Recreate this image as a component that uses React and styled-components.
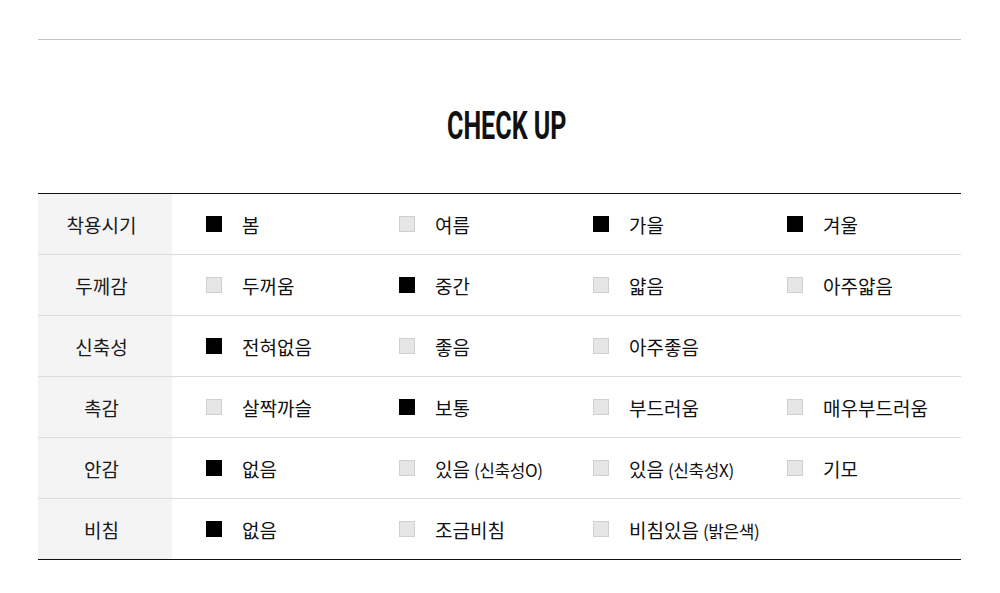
import React from 'react'
import styled, { createGlobalStyle } from 'styled-components'

const rows = [
  { label: '착용시기', items: [['봄', 1], ['여름', 0], ['가을', 1], ['겨울', 1]] },
  { label: '두께감', items: [['두꺼움', 0], ['중간', 1], ['얇음', 0], ['아주얇음', 0]] },
  { label: '신축성', items: [['전혀없음', 1], ['좋음', 0], ['아주좋음', 0]] },
  { label: '촉감', items: [['살짝까슬', 0], ['보통', 1], ['부드러움', 0], ['매우부드러움', 0]] },
  { label: '안감', items: [['없음', 1], ['있음', 0, '(신축성O)'], ['있음', 0, '(신축성X)'], ['기모', 0]] },
  { label: '비침', items: [['없음', 1], ['조금비침', 0], ['비침있음', 0, '(밝은색)']] },
]

function App() {
  return (
    <>
      <Global />
      <Page>
        <TopLine />
        <Title>CHECK UP</Title>
        <Table>
          {rows.map((row) => (
            <Row key={row.label}>
              <Label>{row.label}</Label>
              <Options>
                {row.items.map(([text, on, note]) => (
                  <Option key={text + (note || '')}>
                    <Box $on={!!on} />
                    <span>
                      {text}
                      {note && <Note>{note}</Note>}
                    </span>
                  </Option>
                ))}
              </Options>
            </Row>
          ))}
        </Table>
      </Page>
    </>
  )
}

export default App

const Global = createGlobalStyle`
  body {
    margin: 0;
    background: #fff;
    font-family: "Noto Sans CJK KR", "Noto Sans", sans-serif;
    color: #222;
  }
`

const Page = styled.div`
  width: 923px;
  margin: 0 0 0 38px;
  padding-top: 39px;
`

const TopLine = styled.div`
  height: 1px;
  background: #c4c4c4;
`

const Title = styled.h2`
  margin: 0;
  height: 153px;
  display: flex;
  align-items: center;
  justify-content: center;
  padding: 18px 0 0 22px;
  box-sizing: border-box;
  font-family: Roboto, "Liberation Sans", sans-serif;
  font-weight: 700;
  font-size: 38px;
  color: #111;
  transform: scaleX(0.66);
  letter-spacing: 0;
`

const Table = styled.div`
  border-top: 1px solid #111;
  border-bottom: 1px solid #111;
`

const Row = styled.div`
  display: flex;
  height: 60px;
  & + & {
    border-top: 1px solid #dcdcdc;
  }
`

const Label = styled.div`
  flex: 0 0 134px;
  box-sizing: border-box;
  padding-right: 7px;
  background: #f4f4f4;
  display: flex;
  align-items: center;
  justify-content: center;
  font-size: 19px;
  color: #1a1a1a;
`

const Options = styled.div`
  flex: 1;
  display: grid;
  grid-template-columns: 193px 194px 194px auto;
  padding-left: 34px;
  align-items: center;
`

const Option = styled.div`
  display: flex;
  align-items: center;
  gap: 20px;
  font-size: 19px;
  color: #111;
`

const Box = styled.i`
  width: 16px;
  height: 16px;
  box-sizing: border-box;
  background: ${(p) => (p.$on ? '#000' : '#e6e6e6')};
  border: 1px solid ${(p) => (p.$on ? '#000' : '#cfcfcf')};
`

const Note = styled.small`
  font-size: 17px;
  letter-spacing: -0.4px;
  margin-left: 4px;
`
